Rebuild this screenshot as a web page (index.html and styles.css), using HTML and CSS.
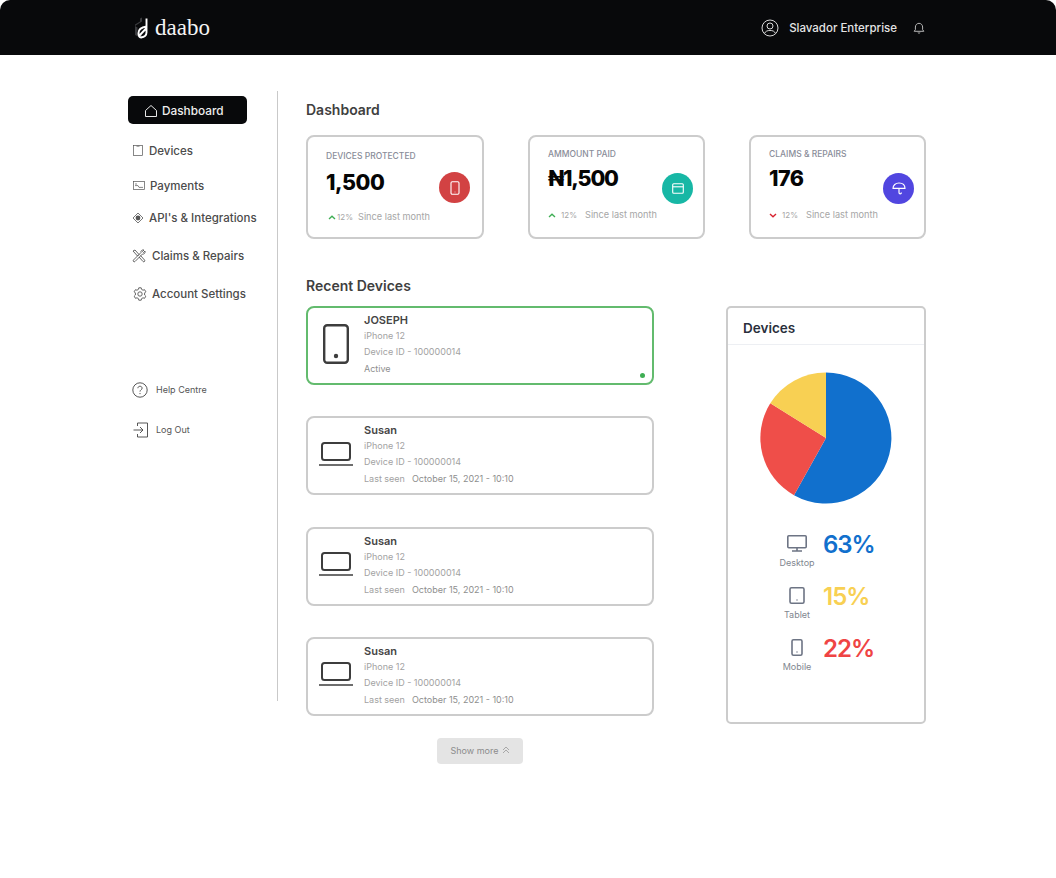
FILE: index.html
```html
<!DOCTYPE html>
<html lang="en">
<head>
    <meta charset="UTF-8">
    <meta name="viewport" content="width=device-width, initial-scale=1.0">
    <title>Daabo Dashboard</title>
    <link rel="stylesheet" href="styles.css">
</head>
<body>

    <header class="topbar">
        <div class="logo">
            <svg class="logo-mark" viewBox="0 0 16 22" width="16" height="22">
                <path d="M1 9 L8 4.5 V0.5 L6 1.5 V4.5 L1 7.5 Z" fill="#3a3b3e"/>
                <path d="M1 9 L1 18 L8 21.5 V18.5 L3.5 16 V10.5 Z" fill="#3a3b3e"/>
                <path d="M12.5 1.5 V15.5 C12.5 18 10.5 20 7 20.5 C5 20.5 4.5 19 4.5 16 C4.5 13 6.5 10.5 12.5 9.5 M5 19 L12.5 11" fill="none" stroke="#fff" stroke-width="1.9"/>
            </svg>
            <span>daabo</span>
        </div>
        <div class="account">
            <svg viewBox="0 0 18 18" width="18" height="18" fill="none" stroke="#d8d8d8" stroke-width="1">
                <circle cx="9" cy="9" r="8"/>
                <circle cx="9" cy="7" r="3"/>
                <path d="M3.5 14.5 C4.5 12 6.5 11.5 9 11.5 C11.5 11.5 13.5 12 14.5 14.5"/>
            </svg>
            <span class="account-name">Slavador Enterprise</span>
            <svg class="bell" viewBox="0 0 12 12" width="12" height="12" fill="none" stroke="#c8c8c8" stroke-width="0.9">
                <path d="M1.2 9.3 H10.8 L9.6 7.6 V5 C9.6 3 8 1.3 6 1.3 C4 1.3 2.4 3 2.4 5 V7.6 Z"/>
                <path d="M4.8 10.6 C5.2 11.2 6.8 11.2 7.2 10.6"/>
            </svg>
        </div>
    </header>

    <div class="layout">
        <aside class="sidebar">
            <a class="nav-active">
                <svg viewBox="0 0 14 14" width="14" height="14" fill="none" stroke="#e8e8e8" stroke-width="1">
                    <path d="M1.5 12.5 H12.5 V6.5 L7 1.5 L1.5 6.5 Z" stroke-linejoin="round"/>
                </svg>
                Dashboard
            </a>
            <a class="nav-item nav-devices">
                <svg viewBox="0 0 10 11" width="10" height="11" fill="none" stroke="#555" stroke-width="0.7">
                    <rect x="0.5" y="0.4" width="9" height="10.2"/>
                    <path d="M3.5 1.2 H6.5"/>
                </svg>
                Devices
            </a>
            <a class="nav-item nav-payments">
                <svg viewBox="0 0 12 9" width="12" height="9" fill="none" stroke="#555" stroke-width="0.7">
                    <rect x="0.4" y="0.4" width="11.2" height="8.2"/>
                    <path d="M2 3 H4 M2 4.6 H5 L6 6.4 H10" />
                </svg>
                Payments
            </a>
            <a class="nav-item nav-api">
                <svg viewBox="0 0 12 12" width="12" height="12" fill="none" stroke="#555" stroke-width="0.8">
                    <path d="M6 1 L11 6 L6 11 L1 6 Z" stroke-linejoin="round"/>
                    <circle cx="6" cy="6" r="2.4" fill="#555" stroke="none"/>
                </svg>
                API's &amp; Integrations
            </a>
            <a class="nav-item nav-claims">
                <svg viewBox="0 0 14 14" width="14" height="14" fill="none" stroke="#555" stroke-width="0.9">
                    <path d="M1 2 L3 1 L7 5.5 L5.5 7 Z"/>
                    <path d="M7 8 L11 12.5 C12 13.5 13.5 12 12.5 11 L8.5 6.5"/>
                    <path d="M1.5 11 L9 3.5 C8.5 2 10 0.5 12 1 L10.5 2.5 L11.5 3.5 L13 2 C13.5 4 12 5.5 10.5 5 L3 12.5 C2 13.5 0.5 12 1.5 11 Z"/>
                </svg>
                Claims &amp; Repairs
            </a>
            <a class="nav-item nav-settings">
                <svg viewBox="0 0 14 14" width="14" height="14" fill="none" stroke="#555" stroke-width="0.9">
                    <path d="M5.8 0.8 H8.2 L8.6 2.4 L10 3.2 L11.6 2.7 L12.8 4.8 L11.6 6 V8 L12.8 9.2 L11.6 11.3 L10 10.8 L8.6 11.6 L8.2 13.2 H5.8 L5.4 11.6 L4 10.8 L2.4 11.3 L1.2 9.2 L2.4 8 V6 L1.2 4.8 L2.4 2.7 L4 3.2 L5.4 2.4 Z" stroke-linejoin="round"/>
                    <circle cx="7" cy="7" r="2.2"/>
                </svg>
                Account Settings
            </a>
            <a class="nav-small nav-help">
                <svg viewBox="0 0 16 16" width="16" height="16" fill="none" stroke="#444" stroke-width="0.9">
                    <circle cx="8" cy="8" r="7.2"/>
                    <path d="M5.9 6.2 C5.9 3.6 10.1 3.6 10.1 6.2 C10.1 7.8 8 7.8 8 9.6"/>
                    <circle cx="8" cy="11.6" r="0.6" fill="#444" stroke="none"/>
                </svg>
                Help Centre
            </a>
            <a class="nav-small nav-logout">
                <svg viewBox="0 0 16 16" width="16" height="16" fill="none" stroke="#444" stroke-width="0.9">
                    <path d="M0.5 8 H10 M7 5 L10 8 L7 11"/>
                    <path d="M4.5 4 V1 H14.5 V15 H4.5 V12" stroke-linejoin="round"/>
                </svg>
                Log Out
            </a>
        </aside>

        <main class="content">
            <h2 class="section-title">Dashboard</h2>

            <section class="stats">
                <div class="stat stat-first">
                    <div class="stat-text">
                        <div class="stat-label">Devices Protected</div>
                        <div class="stat-value">1,500</div>
                        <div class="stat-foot stat-foot-tight">
                            <svg class="chev" viewBox="0 0 8 5" width="8" height="5"><path d="M1 4 L4 1.3 L7 4" fill="none" stroke="#3fae54" stroke-width="1.4"/></svg>
                            <span>12%</span><span class="since">Since last month</span>
                        </div>
                    </div>
                    <div class="stat-icon icon-red">
                        <svg viewBox="0 0 10 14" width="10" height="14" fill="none" stroke="#fff" stroke-width="1.1">
                            <rect x="1" y="0.8" width="8" height="12.4" rx="1.2"/>
                            <path d="M4.7 11 H5.3"/>
                        </svg>
                    </div>
                </div>
                <div class="stat">
                    <div class="stat-text">
                        <div class="stat-label">Ammount Paid</div>
                        <div class="stat-value stat-value-naira">₦1,500</div>
                        <div class="stat-foot">
                            <svg class="chev" viewBox="0 0 8 5" width="8" height="5"><path d="M1 4 L4 1.3 L7 4" fill="none" stroke="#3fae54" stroke-width="1.4"/></svg>
                            <span>12%</span><span class="since">Since last month</span>
                        </div>
                    </div>
                    <div class="stat-icon icon-teal">
                        <svg viewBox="0 0 12 11" width="12" height="11" fill="none" stroke="#fff" stroke-width="1.1">
                            <rect x="0.7" y="0.7" width="10.6" height="9.6" rx="1"/>
                            <path d="M0.7 3.8 H11.3"/>
                        </svg>
                    </div>
                </div>
                <div class="stat">
                    <div class="stat-text">
                        <div class="stat-label">Claims &amp; Repairs</div>
                        <div class="stat-value">176</div>
                        <div class="stat-foot">
                            <svg class="chev" viewBox="0 0 8 5" width="8" height="5"><path d="M1 1 L4 3.7 L7 1" fill="none" stroke="#d8232f" stroke-width="1.4"/></svg>
                            <span>12%</span><span class="since">Since last month</span>
                        </div>
                    </div>
                    <div class="stat-icon icon-purple">
                        <svg viewBox="0 0 14 13" width="14" height="13" fill="none" stroke="#fff" stroke-width="1.2">
                            <path d="M1 6.4 C1 3 3.6 1 7 1 C10.4 1 13 3 13 6.4 Z" stroke-linejoin="round"/>
                            <path d="M7 6.4 V10.5 C7 12.2 9.4 12.2 9.4 10.5"/>
                        </svg>
                    </div>
                </div>
            </section>

            <h2 class="section-title recent-title">Recent Devices</h2>

            <section class="recent">
                <div class="device-col">
                    <div class="device-list">
                        <div class="device device-active">
                            <div class="device-icon">
                                <svg viewBox="0 0 26 40" width="26" height="40" fill="none" stroke="#3d3d3d" stroke-width="2.4">
                                    <rect x="1.2" y="1.2" width="23.6" height="37.6" rx="3"/>
                                    <circle cx="13" cy="32" r="2.2" fill="#3d3d3d" stroke="none"/>
                                </svg>
                            </div>
                            <div class="device-text">
                                <div class="device-name">JOSEPH</div>
                                <div class="device-meta">iPhone 12</div>
                                <div class="device-meta">Device ID - 100000014</div>
                                <div class="device-status">Active</div>
                            </div>
                            <span class="online-dot"></span>
                        </div>
                        <div class="device">
                            <div class="device-icon">
                                <svg viewBox="0 0 34 24" width="34" height="24" fill="none" stroke="#3d3d3d" stroke-width="2">
                                    <rect x="3" y="1" width="28" height="17" rx="2.5"/>
                                    <path d="M0 23 H34" stroke-width="1.6"/>
                                </svg>
                            </div>
                            <div class="device-text">
                                <div class="device-name">Susan</div>
                                <div class="device-meta">iPhone 12</div>
                                <div class="device-meta">Device ID - 100000014</div>
                                <div class="device-status"><span class="seen">Last seen</span>October 15, 2021 - 10:10</div>
                            </div>
                        </div>
                        <div class="device">
                            <div class="device-icon">
                                <svg viewBox="0 0 34 24" width="34" height="24" fill="none" stroke="#3d3d3d" stroke-width="2">
                                    <rect x="3" y="1" width="28" height="17" rx="2.5"/>
                                    <path d="M0 23 H34" stroke-width="1.6"/>
                                </svg>
                            </div>
                            <div class="device-text">
                                <div class="device-name">Susan</div>
                                <div class="device-meta">iPhone 12</div>
                                <div class="device-meta">Device ID - 100000014</div>
                                <div class="device-status"><span class="seen">Last seen</span>October 15, 2021 - 10:10</div>
                            </div>
                        </div>
                        <div class="device">
                            <div class="device-icon">
                                <svg viewBox="0 0 34 24" width="34" height="24" fill="none" stroke="#3d3d3d" stroke-width="2">
                                    <rect x="3" y="1" width="28" height="17" rx="2.5"/>
                                    <path d="M0 23 H34" stroke-width="1.6"/>
                                </svg>
                            </div>
                            <div class="device-text">
                                <div class="device-name">Susan</div>
                                <div class="device-meta">iPhone 12</div>
                                <div class="device-meta">Device ID - 100000014</div>
                                <div class="device-status"><span class="seen">Last seen</span>October 15, 2021 - 10:10</div>
                            </div>
                        </div>
                    </div>
                    <button class="show-more">
                        Show more
                        <svg viewBox="0 0 8 8" width="8" height="8" fill="none" stroke="#a0a0a0" stroke-width="0.9">
                            <path d="M1 4 L4 1 L7 4 M1 7 L4 4 L7 7"/>
                        </svg>
                    </button>
                </div>

                <div class="panel">
                    <div class="panel-head">Devices</div>
                    <svg class="pie" viewBox="0 0 132 132" width="132" height="132">
                        <path d="M66 66 L66 0.5 A65.5 65.5 0 1 1 34 123.2 Z" fill="#1170cd"/>
                        <path d="M66 66 L34 123.2 A65.5 65.5 0 0 1 10.3 31.3 Z" fill="#ef4e49"/>
                        <path d="M66 66 L10.3 31.3 A65.5 65.5 0 0 1 66 0.5 Z" fill="#f8d053"/>
                    </svg>
                    <div class="legend">
                        <div class="legend-row">
                            <div class="legend-key">
                                <svg viewBox="0 0 20 17" width="20" height="17" fill="none" stroke="#6d7484" stroke-width="1.6">
                                    <rect x="0.8" y="0.8" width="18.4" height="12" rx="1"/>
                                    <path d="M10 13 V15.5 M5 16 H15"/>
                                </svg>
                                <span>Desktop</span>
                            </div>
                            <div class="legend-value value-blue">63%</div>
                        </div>
                        <div class="legend-row">
                            <div class="legend-key">
                                <svg viewBox="0 0 16 17" width="16" height="17" fill="none" stroke="#6d7484" stroke-width="1.6">
                                    <rect x="1" y="0.8" width="14" height="15.4" rx="1.5"/>
                                    <path d="M7.5 13 H8.5"/>
                                </svg>
                                <span>Tablet</span>
                            </div>
                            <div class="legend-value value-yellow">15%</div>
                        </div>
                        <div class="legend-row">
                            <div class="legend-key">
                                <svg viewBox="0 0 12 17" width="12" height="17" fill="none" stroke="#6d7484" stroke-width="1.6">
                                    <rect x="1" y="0.8" width="10" height="15.4" rx="1.5"/>
                                    <path d="M5.5 13 H6.5"/>
                                </svg>
                                <span>Mobile</span>
                            </div>
                            <div class="legend-value value-red">22%</div>
                        </div>
                    </div>
                </div>
            </section>
        </main>
    </div>

</body>
</html>
```

FILE: styles.css
```css
body {
    margin: 0;
    font-family: Inter, "Liberation Sans", sans-serif;
    background-color: #fff;
    color: #444;
}
svg {
    display: block;
    flex-shrink: 0;
}

/* top bar */
.topbar {
    height: 55px;
    background-color: #08090b;
    border-radius: 10px 10px 0 0;
    display: flex;
    align-items: center;
    justify-content: space-between;
    padding: 0 131px 0 134px;
}
.logo {
    display: flex;
    align-items: center;
    gap: 5px;
    color: #f4f4f4;
    font-family: "Liberation Serif", serif;
    font-size: 23px;
}
.account {
    display: flex;
    align-items: center;
    color: #e4e4e4;
    font-size: 11.5px;
    font-weight: 500;
}
.account-name {
    margin: 0 16px 0 10px;
}

/* sidebar */
.layout {
    display: flex;
    padding: 36px 0 0 128px;
}
.sidebar {
    width: 149px;
    height: 610px;
    flex-shrink: 0;
    border-right: 1px solid #c9c9c9;
    display: flex;
    flex-direction: column;
    align-items: flex-start;
}
.nav-active {
    width: 119px;
    height: 28px;
    box-sizing: border-box;
    margin-top: 5px;
    padding: 1px 0 0 16px;
    display: flex;
    align-items: center;
    gap: 4px;
    background-color: #08090b;
    border-radius: 5px;
    color: #eee;
    font-size: 11.8px;
    font-weight: 500;
}
.nav-item {
    height: 20px;
    box-sizing: border-box;
    padding-top: 1px;
    margin-left: 4px;
    display: flex;
    align-items: center;
    gap: 5px;
    color: #4b4b4b;
    font-size: 11.5px;
    font-weight: 500;
}
.nav-small {
    height: 20px;
    box-sizing: border-box;
    padding-top: 1px;
    margin-left: 4px;
    display: flex;
    align-items: center;
    gap: 8px;
    color: #555;
    font-size: 9px;
}
.nav-devices { margin-top: 16px; margin-left: 5px; gap: 6px; }
.nav-payments { margin-top: 15px; margin-left: 5px; }
.nav-api { margin-top: 12px; }
.nav-claims { margin-top: 18px; gap: 6px; }
.nav-settings { margin-top: 18px; margin-left: 5px; }
.nav-help { margin-top: 76px; }
.nav-logout { margin-top: 20px; margin-left: 5px; gap: 7px; }

/* main column */
.content {
    width: 620px;
    margin-left: 28px;
}
.section-title {
    margin: 10px 0 0;
    font-size: 14px;
    line-height: 18px;
    font-weight: 600;
    color: #3f3f3f;
}
.recent-title {
    margin-top: 38px;
}

/* stat cards */
.stats {
    display: grid;
    grid-template-columns: 178px 177px 177px;
    column-gap: 44px;
    margin-top: 16px;
}
.stat {
    height: 104px;
    box-sizing: border-box;
    border: 2px solid #cccccc;
    border-radius: 8px;
    padding: 11px 10px 0 18px;
    display: flex;
    justify-content: space-between;
}
.stat-first {
    padding-top: 13px;
    padding-right: 12px;
}
.stat-label {
    font-size: 8.5px;
    line-height: 12px;
    font-weight: 500;
    text-transform: uppercase;
    color: #8a8d99;
}
.stat-value {
    margin-top: 4px;
    font-size: 21.5px;
    line-height: 28px;
    font-weight: 800;
    letter-spacing: -0.5px;
    color: #050505;
}
.stat-value-naira {
    letter-spacing: -1.2px;
}
.stat-first .stat-value {
    margin-top: 6px;
}
.stat-foot {
    margin-top: 17px;
    display: flex;
    align-items: center;
    gap: 5px;
    font-size: 8px;
    line-height: 12px;
    color: #a6a6a6;
    white-space: nowrap;
}
.stat-first .stat-foot {
    margin-top: 15px;
}
.stat-foot-tight {
    gap: 1px;
    padding-left: 2px;
}
.since {
    margin-left: 3px;
    font-size: 9.2px;
}
.stat-foot-tight .since {
    margin-left: 4px;
}
.stat-icon {
    width: 31px;
    height: 31px;
    margin-top: 25px;
    border-radius: 50%;
    display: flex;
    align-items: center;
    justify-content: center;
    flex-shrink: 0;
}
.stat-first .stat-icon {
    margin-top: 22px;
}
.icon-red { background-color: #d24243; }
.icon-teal { background-color: #17b7a5; }
.icon-purple { background-color: #5146e0; }

/* recent devices */
.recent {
    display: flex;
    justify-content: space-between;
    align-items: flex-start;
    margin-top: 11px;
}
.device-col {
    width: 348px;
}
.device-list {
    display: flex;
    flex-direction: column;
    gap: 31.3px;
}
.device {
    position: relative;
    height: 79px;
    box-sizing: border-box;
    border: 2px solid #cccccc;
    border-radius: 8px;
    display: flex;
    align-items: center;
}
.device-active {
    border-color: #63bb6e;
}
.device-icon {
    width: 56px;
    padding-bottom: 4px;
    display: flex;
    justify-content: center;
    flex-shrink: 0;
}
.device-text {
    padding-bottom: 2px;
}
.device-name {
    font-size: 11px;
    line-height: 14px;
    font-weight: 600;
    color: #454545;
}
.device-meta {
    margin-top: 2px;
    font-size: 9px;
    line-height: 14px;
    color: #a2a2a2;
}
.device-status {
    margin-top: 3px;
    font-size: 9px;
    line-height: 14px;
    color: #8e8e8e;
}
.seen {
    margin-right: 7px;
    color: #a2a2a2;
}
.online-dot {
    position: absolute;
    right: 7px;
    bottom: 5px;
    width: 5px;
    height: 5px;
    border-radius: 50%;
    background-color: #3fae54;
}
.show-more {
    display: flex;
    align-items: center;
    justify-content: center;
    gap: 3px;
    width: 86px;
    height: 26px;
    margin: 22px auto 0;
    padding: 0 0 1px;
    border: none;
    border-radius: 4px;
    background-color: #e4e4e4;
    color: #8c8c8c;
    font-family: inherit;
    font-size: 9px;
    font-weight: 400;
}

/* devices panel */
.panel {
    width: 200px;
    height: 418px;
    box-sizing: border-box;
    border: 2px solid #cccccc;
    border-radius: 5px;
    display: flex;
    flex-direction: column;
}
.panel-head {
    height: 32px;
    padding: 4px 0 0 15px;
    display: flex;
    align-items: center;
    border-bottom: 1px solid #edeff3;
    font-size: 13.5px;
    font-weight: 600;
    color: #2a2f3c;
}
.pie {
    margin: 27px auto 0;
}
.legend {
    margin-top: 31px;
    padding-left: 49px;
    display: flex;
    flex-direction: column;
    gap: 8px;
}
.legend-row {
    height: 44px;
    display: flex;
    column-gap: 6px;
}
.legend-key {
    width: 40px;
    display: flex;
    flex-direction: column;
    align-items: center;
    gap: 5px;
    font-size: 9px;
    line-height: 12px;
    color: #81868f;
}
.legend-value {
    font-size: 24px;
    line-height: 20px;
    font-weight: 600;
    letter-spacing: -1px;
}
.value-blue { color: #1170cd; }
.value-yellow { color: #f8d053; }
.value-red { color: #ef4444; }
```
